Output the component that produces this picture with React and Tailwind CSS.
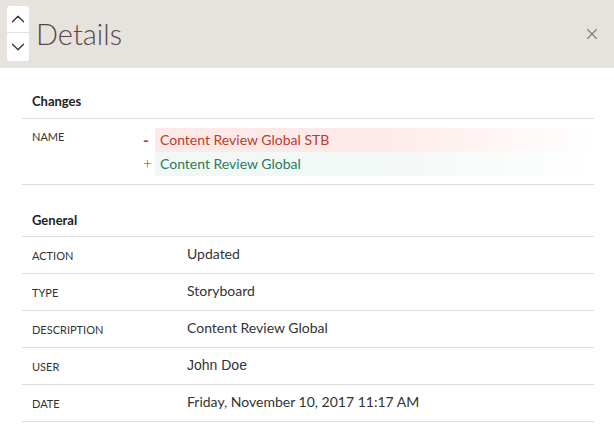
import React from "react";
import { ChevronUp, ChevronDown, X } from "lucide-react";

const general = [
  { label: "ACTION", value: "Updated" },
  { label: "TYPE", value: "Storyboard" },
  { label: "DESCRIPTION", value: "Content Review Global" },
  { label: "USER", value: "John Doe", arial: true },
  { label: "DATE", value: "Friday, November 10, 2017 11:17 AM" },
];

export default function App() {
  return (
    <div className="w-[614px] h-[426px] bg-white overflow-hidden font-['Lato',sans-serif] text-[#333]">
      {/* Header */}
      <div className="h-[68px] bg-[#e6e2dd] flex items-center pl-[7px] pr-[13px]">
        <div className="w-[22px] h-[55px] bg-white rounded-[3px] flex flex-col -mt-[1px]">
          <button className="h-[27px] flex items-center justify-center border-b border-[#e2e2e2] text-[#333]">
            <ChevronUp size={22} strokeWidth={1.4} />
          </button>
          <button className="flex-1 flex items-center justify-center text-[#333]">
            <ChevronDown size={22} strokeWidth={1.4} />
          </button>
        </div>
        <h1 className="ml-[7px] text-[29px] font-light text-[#5a4848] leading-none -mt-[2px]">
          Details
        </h1>
        <button className="ml-auto text-[#7b7b7b] -mt-[1px]">
          <X size={18} strokeWidth={1.5} />
        </button>
      </div>

      <div className="pl-[22px] pr-[20px]">
        {/* Changes */}
        <div className="pt-[24px] pb-[6px] pl-[10px] text-[13px] font-bold text-[#222]">Changes</div>
        <div className="border-t border-[#dcdcdc] flex pt-[9px] pb-[8px]">
          <div className="w-[121px] pl-[10px] pt-[1px] text-[11px] text-[#333]">NAME</div>
          <div className="flex-1 flex flex-col">
            <div className="flex items-center h-[24px]">
              <span className="w-[12px] text-[#c0392b] text-[16px] font-bold leading-none">-</span>
              <div className="flex-1 h-full flex items-center pl-[5px] text-[14px] text-[#c0392b] bg-gradient-to-r from-[#fdeae8] from-50% to-white">
                Content Review Global STB
              </div>
            </div>
            <div className="flex items-center h-[24px]">
              <span className="w-[12px] text-[#2e5e36] text-[15px] font-light leading-none">+</span>
              <div className="flex-1 h-full flex items-center pl-[5px] text-[14px] text-[#2a7a5c] bg-gradient-to-r from-[#f2f8f6] from-50% to-white">
                Content Review Global
              </div>
            </div>
          </div>
        </div>

        {/* General */}
        <div className="border-t border-[#dcdcdc] pt-[26px] pb-[6px] pl-[10px] text-[13px] font-bold text-[#222]">
          General
        </div>
        {general.map((row) => (
          <div key={row.label} className="border-t border-[#dcdcdc] h-[37px] flex items-center">
            <div className="w-[165px] pl-[10px] pt-[2px] text-[11px] text-[#333]">{row.label}</div>
            <div
              className={
                row.arial
                  ? "text-[14px] text-[#333] font-['Liberation_Sans',sans-serif] pb-[1px]"
                  : "text-[14px] text-[#333] pb-[4px]"
              }
            >
              {row.value}
            </div>
          </div>
        ))}
        <div className="border-t border-[#dcdcdc]" />
      </div>
    </div>
  );
}
